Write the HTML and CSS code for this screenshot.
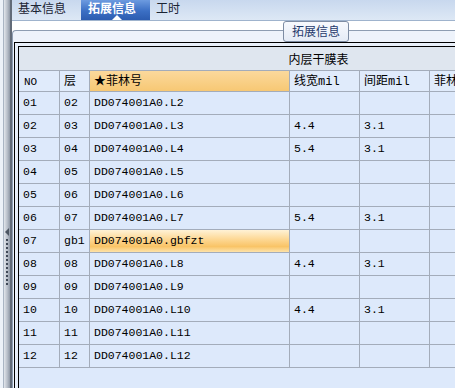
FILE: index.html
```html
<!DOCTYPE html>
<html lang="zh-CN">
<head>
  <meta charset="UTF-8">
  <meta name="viewport" content="width=device-width, initial-scale=1.0">
  <title>拓展信息</title>
  <link rel="stylesheet" href="styles.css">
</head>
<body>
  <div class="window">
    <!-- left collapsed panel + splitter -->
    <div class="side">
      <div class="strip"></div>
      <div class="splitter">
        <span class="arrow"></span>
        <span class="grip"></span>
      </div>
      <div class="edge"></div>
    </div>

    <div class="main">
      <div class="tabs">
        <span class="tab">基本信息</span>
        <span class="tab active">拓展信息</span>
        <span class="tab">工时</span>
      </div>
      <div class="gap"></div>

      <div class="group">
        <div class="group-title">拓展信息</div>
        <div class="frame">
          <div class="frame-inner">
            <div class="caption">内层干膜表</div>
            <table class="grid">
              <thead>
                <tr>
                  <th class="c-no">NO</th>
                  <th class="c-layer">层</th>
                  <th class="c-film sorted">★菲林号</th>
                  <th class="c-num">线宽mil</th>
                  <th class="c-num">间距mil</th>
                  <th class="c-rest">菲林</th>
                </tr>
              </thead>
              <tbody>
                <tr><td>01</td><td>02</td><td>DD074001A0.L2</td><td></td><td></td><td></td></tr>
                <tr><td>02</td><td>03</td><td>DD074001A0.L3</td><td>4.4</td><td>3.1</td><td></td></tr>
                <tr><td>03</td><td>04</td><td>DD074001A0.L4</td><td>5.4</td><td>3.1</td><td></td></tr>
                <tr><td>04</td><td>05</td><td>DD074001A0.L5</td><td></td><td></td><td></td></tr>
                <tr><td>05</td><td>06</td><td>DD074001A0.L6</td><td></td><td></td><td></td></tr>
                <tr><td>06</td><td>07</td><td>DD074001A0.L7</td><td>5.4</td><td>3.1</td><td></td></tr>
                <tr><td>07</td><td>gb1</td><td class="selected">DD074001A0.gbfzt</td><td></td><td></td><td></td></tr>
                <tr><td>08</td><td>08</td><td>DD074001A0.L8</td><td>4.4</td><td>3.1</td><td></td></tr>
                <tr><td>09</td><td>09</td><td>DD074001A0.L9</td><td></td><td></td><td></td></tr>
                <tr><td>10</td><td>10</td><td>DD074001A0.L10</td><td>4.4</td><td>3.1</td><td></td></tr>
                <tr><td>11</td><td>11</td><td>DD074001A0.L11</td><td></td><td></td><td></td></tr>
                <tr><td>12</td><td>12</td><td>DD074001A0.L12</td><td></td><td></td><td></td></tr>
              </tbody>
            </table>
          </div>
        </div>
      </div>
    </div>
  </div>
</body>
</html>
```

FILE: styles.css
```css
html, body {
  margin: 0;
  padding: 0;
  overflow: hidden;
}

body {
  font-family: "Noto Sans CJK SC", "Liberation Sans", sans-serif;
  font-size: 12px;
  background: #ffffff;
}

.window {
  display: flex;
  width: 455px;
  height: 388px;
  overflow: hidden;
}

/* left side */
.side {
  display: flex;
  flex: none;
  width: 12px;
}

.strip {
  width: 3px;
  background: #edf2f9;
  border-right: 1px solid #aab5c4;
}

.splitter {
  position: relative;
  width: 6px;
  background: linear-gradient(to right, #e2e6ec, #b4bbc6 60%, #8f98a6);
}

.arrow {
  position: absolute;
  left: 1px;
  top: 228px;
  width: 0;
  height: 0;
  border-top: 4px solid transparent;
  border-bottom: 4px solid transparent;
  border-right: 4px solid #4c5562;
}

.grip {
  position: absolute;
  left: 2px;
  top: 239px;
  width: 2px;
  height: 48px;
  background: repeating-linear-gradient(to bottom, #3f4856 0, #3f4856 2px, transparent 2px, transparent 4px);
}

.edge {
  width: 2px;
  background: #626b78;
}

/* main */
.main {
  flex: 1;
  min-width: 0;
  overflow: hidden;
}

.tabs {
  display: flex;
  height: 20px;
  background: linear-gradient(#c8d8ee, #dde8f5);
  border-bottom: 1px solid #9fb3cd;
}

.tab {
  box-sizing: border-box;
  width: 69px;
  padding-left: 6px;
  line-height: 16px;
  color: #1b2433;
}

.tab.active {
  position: relative;
  padding-left: 7px;
  color: #ffffff;
  font-weight: bold;
  background: linear-gradient(#6d9be0, #3b6fc4 55%, #2c5cb0);
}

.tab.active::after {
  content: "";
  position: absolute;
  left: 31px;
  bottom: 0;
  border-left: 5px solid transparent;
  border-right: 5px solid transparent;
  border-bottom: 5px solid #ffffff;
}

.gap {
  height: 9px;
  background: #ffffff;
}

.group {
  position: relative;
  border-top: 1px solid #8e9db2;
  border-left: 1px solid #8e9db2;
  border-top-left-radius: 4px;
  background: #eef3fb;
  padding: 11px 0 0 1px;
  height: 400px;
}

.group-title {
  position: absolute;
  left: 270px;
  top: -10px;
  padding: 0 8px;
  height: 19px;
  line-height: 18px;
  font-size: 12px;
  color: #1f3a6b;
  border: 1px solid #7d8ca3;
  border-radius: 3px;
  background: linear-gradient(#f7f9fd, #e4ebf6);
}

.frame {
  width: 601px;
  border: 1px solid #000000;
  padding: 3px;
  background: #e9f0fa;
}

.frame-inner {
  border: 1px solid #000000;
  background: #dde9fb;
  min-height: 400px;
}

.caption {
  height: 23px;
  line-height: 23px;
  text-align: center;
  background: #dfe6ef;
  border-bottom: 1px solid #a3acba;
  color: #000000;
}

/* data grid */
.grid {
  border-collapse: separate;
  border-spacing: 0;
  table-layout: fixed;
  width: 591px;
}

.grid th,
.grid td {
  box-sizing: border-box;
  border-right: 1px solid #a3acba;
  border-bottom: 1px solid #a3acba;
  padding: 0 0 0 4px;
  text-align: left;
  white-space: nowrap;
  overflow: hidden;
  color: #000000;
}

.grid th {
  height: 21px;
  padding-top: 2px;
  font-weight: normal;
  font-family: "Liberation Mono", "Noto Sans CJK SC", monospace;
  font-size: 12px;
  line-height: 18px;
  background: #e0ebfb;
}

.grid td {
  height: 23px;
  font-family: "Liberation Mono", "Noto Sans CJK SC", monospace;
  font-size: 11.5px;
  line-height: 22px;
  background: #dde9fb;
}

.grid .c-no { width: 41px; padding-left: 5px; font-size: 11px; }
.grid .c-layer { width: 30px; }
.grid .c-film { width: 200px; }
.grid .c-num { width: 70px; }
.grid .c-rest { width: 180px; }

.grid th.sorted {
  background: linear-gradient(#fbd99c, #f7c874);
}

.grid td.selected {
  background: linear-gradient(#fff2d6, #fdd690 45%, #f9c467 75%, #fde3aa);
}
```
